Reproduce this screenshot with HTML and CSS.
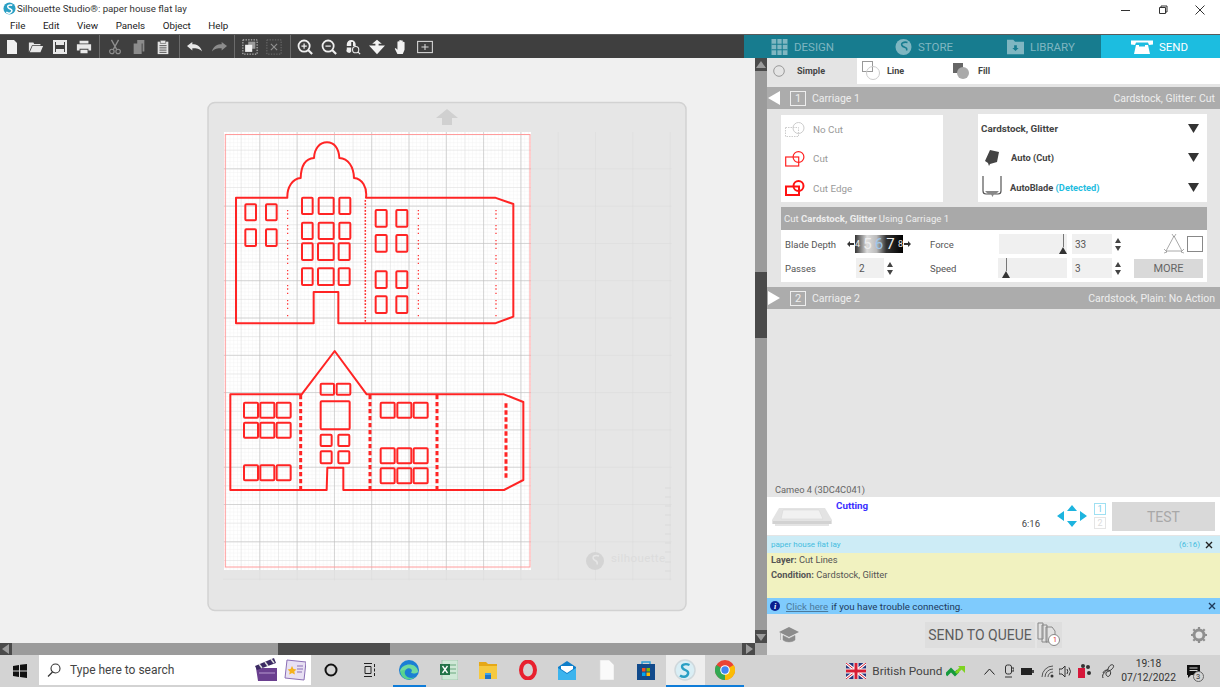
FILE: index.html
```html
<!DOCTYPE html>
<html lang="en">
<head>
<meta charset="utf-8">
<title>Silhouette Studio</title>
<link rel="stylesheet" href="styles.css">
</head>
<body>
<svg class="defs" width="0" height="0" aria-hidden="true">
  <defs>
    <pattern id="fine" x="223" y="132" width="3.73" height="3.73" patternUnits="userSpaceOnUse"><path d="M3.73 0V3.73H0" fill="none" stroke="#ececec" stroke-width=".6"/></pattern>
    <pattern id="mid" x="223" y="132" width="18.65" height="18.65" patternUnits="userSpaceOnUse"><path d="M18.65 0V18.65H0" fill="none" stroke="#d6d6d6" stroke-width=".8"/></pattern>
    <pattern id="major" x="223" y="132" width="37.3" height="37.3" patternUnits="userSpaceOnUse"><path d="M37.3 0V37.3H0" fill="none" stroke="#bdbdbd" stroke-width="1"/></pattern>
    <pattern id="matgrid" x="223" y="132" width="37.3" height="37.3" patternUnits="userSpaceOnUse"><path d="M37.3 0V37.3H0" fill="none" stroke="#d9d9d9" stroke-width="1"/></pattern>
  </defs>
</svg>
<div class="app">
  <header class="titlebar">
    <div class="title-left">
      <svg class="ic14" viewBox="0 0 14 14"><circle cx="7" cy="7" r="6.5" fill="#2a9fc4"/><path d="M10 3.5C7 2.5 4 4 5.5 6s5 1.500 4 4-4 2.500-6 1" fill="none" stroke="#fff" stroke-width="1.600"/></svg>
      <span>Silhouette Studio®: paper house flat lay</span>
    </div>
    <div class="winctl">
      <span class="winbtn"><svg width="10" height="10" viewBox="0 0 10 10"><path d="M0 5.500H9" stroke="#333" fill="none"/></svg></span>
      <span class="winbtn"><svg width="10" height="10" viewBox="0 0 10 10"><path d="M1.500 2.500h6v6h-6zM3 2.500V1h6v6H7.500" stroke="#333" fill="none"/></svg></span>
      <span class="winbtn"><svg width="10" height="10" viewBox="0 0 10 10"><path d="M.5.500l9 9M9.500.500l-9 9" stroke="#333" fill="none"/></svg></span>
    </div>
  </header>
  <nav class="menubar"><span>File</span><span>Edit</span><span>View</span><span>Panels</span><span>Object</span><span>Help</span></nav>

  <div class="toolbar">
    <div class="tools">
      <div class="toolgroup g1">
        <span class="tool"><svg viewBox="0 0 16 16"><path d="M3 1h7l3 3v11H3z" fill="#f0f0f0"/></svg></span>
        <span class="tool"><svg viewBox="0 0 18 16"><path d="M1 14V3h5l1 1.500h7V6H4.500zM5 7h12l-3 7H2z" fill="#e8e8e8"/></svg></span>
        <span class="tool"><svg viewBox="0 0 16 16"><path d="M2 2h12v12H2z" fill="none" stroke="#e8e8e8" stroke-width="2"/><path d="M4 2h8v4H4zM4 10h8v4H4z" fill="#e8e8e8"/></svg></span>
        <span class="tool"><svg viewBox="0 0 18 16"><path d="M4 1h10v3H4zM1 5h16v7h-3v-2H4v2H1zM5 11h8v4H5z" fill="#e8e8e8"/></svg></span>
      </div>
      <div class="toolgroup g2">
        <span class="tool"><svg viewBox="0 0 16 18"><path d="M4 1l6 11M12 1L6 12" stroke="#8f8f8f" stroke-width="1.500" fill="none"/><circle cx="4.500" cy="14" r="2.500" fill="none" stroke="#8f8f8f" stroke-width="1.300"/><circle cx="11.500" cy="14" r="2.500" fill="none" stroke="#8f8f8f" stroke-width="1.300"/></svg></span>
        <span class="tool"><svg viewBox="0 0 16 18"><path d="M6 1h8v13h-2V5H6zM2 5h9v12H2z" fill="#8c8c8c"/></svg></span>
        <span class="tool"><svg viewBox="0 0 14 18"><path d="M1 3h12v14H1z" fill="#e4e4e4"/><path d="M4 1.500h6V5H4z" fill="#e4e4e4" stroke="#444" stroke-width=".6"/><path d="M3 7.500h8M3 10h8M3 12.500h8M3 15h8" stroke="#444"/></svg></span>
      </div>
      <div class="toolgroup g3">
        <span class="tool"><svg viewBox="0 0 18 12"><path d="M0 5l6-4.500V3c5 0 9 2 11 8-3-3-6-3.500-11-3.500V10z" fill="#e8e8e8"/></svg></span>
        <span class="tool"><svg viewBox="0 0 18 12"><path d="M18 5L12 .5V3C7 3 3 5 1 11c3-3 6-3.500 11-3.500V10z" fill="#8c8c8c"/></svg></span>
      </div>
      <div class="toolgroup g4">
        <span class="tool"><svg viewBox="0 0 18 18"><rect x="1" y="1" width="16" height="16" fill="none" stroke="#e0e0e0" stroke-dasharray="1.500 1.500"/><path d="M7 3h8v8H7z" fill="#9a9a9a"/><path d="M3.500 6.500h8v8h-8z" fill="#f0f0f0"/></svg></span>
        <span class="tool"><svg viewBox="0 0 18 18"><rect x="1" y="1" width="16" height="16" fill="none" stroke="#777" stroke-dasharray="1.500 1.500"/><path d="M5.500 5.500l7 7M12.500 5.500l-7 7" stroke="#8f8f8f" stroke-width="1.300"/></svg></span>
      </div>
      <div class="toolgroup g5">
        <span class="tool"><svg viewBox="0 0 18 18"><circle cx="8" cy="8" r="6.300" fill="none" stroke="#efefef" stroke-width="2"/><path d="M12.500 12.500L17 17" stroke="#efefef" stroke-width="2.400"/><path d="M5 8h6M8 5v6" stroke="#efefef" stroke-width="1.400"/></svg></span>
        <span class="tool"><svg viewBox="0 0 18 18"><circle cx="8" cy="8" r="6.300" fill="none" stroke="#efefef" stroke-width="2"/><path d="M12.500 12.500L17 17" stroke="#efefef" stroke-width="2.400"/><path d="M5 8h6" stroke="#efefef" stroke-width="1.400"/></svg></span>
        <span class="tool"><svg viewBox="0 0 18 18"><path d="M2 6a5 5 0 0 1 10 0v2H9V3.500H7V8H2z" fill="#efefef"/><path d="M2 9.500h5V14a2.500 2.500 0 0 1-5-2.500z" fill="#efefef"/><circle cx="12" cy="12" r="3.500" fill="none" stroke="#efefef" stroke-width="1.200"/><path d="M14.500 14.500L17 17" stroke="#efefef" stroke-width="1.400"/></svg></span>
        <span class="tool"><svg viewBox="0 0 20 18"><path d="M10 0l6 5h-4v2h8l-10 11L0 7h8V5H4z" fill="#f2f2f2"/></svg></span>
        <span class="tool"><svg viewBox="0 0 16 18"><path d="M4 17l-3-6 1-1 2 2V3.500a1 1 0 0 1 2 0V8V2a1 1 0 0 1 2 0v6V2.500a1 1 0 0 1 2 0V8V4a1 1 0 0 1 2 0v8l-2 5z" fill="#f2f2f2"/></svg></span>
        <span class="tool"><svg viewBox="0 0 18 14"><rect x=".7" y=".7" width="16.600" height="12.600" fill="none" stroke="#d8d8d8" stroke-width="1.200"/><path d="M5 7h8M9 3.500v7" stroke="#d8d8d8" stroke-width="1.200"/></svg></span>
      </div>
    </div>
    <div class="tabs">
      <div class="tab t-design"><svg viewBox="0 0 16 16"><path d="M0 0h16v16H0z" fill="#7fb6c1"/><path d="M5.300 0v16M10.700 0v16M0 5.300h16M0 10.700h16" stroke="#177c8f" stroke-width="1.100"/></svg><span>DESIGN</span></div>
      <div class="tab t-store"><svg viewBox="0 0 16 16"><circle cx="8" cy="8" r="8" fill="#7fb6c1"/><path d="M12 3.500C8.500 2.500 5 4 6.500 6.500s6 1.500 4.500 5" fill="none" stroke="#177c8f" stroke-width="1.600"/></svg><span>STORE</span></div>
      <div class="tab t-library"><svg viewBox="0 0 19 16"><path d="M0 0h7l2 2h10v14H0z" fill="#7fb6c1"/><path d="M8 6h3v3h2l-3.500 3.500L6 9h2z" fill="#177c8f"/></svg><span>LIBRARY</span></div>
      <div class="tab t-send"><svg viewBox="0 0 22 16"><path d="M0 1.500h22v4l-4 .5-1-2.500H5L4 6l-4-.5z" fill="#fff"/><path d="M5 6h12l2 9H3z" fill="#fff"/><path d="M8 4.500h6v3H8z" fill="#1cbde0"/></svg><span>SEND</span></div>
    </div>
  </div>

  <main class="workspace">
    <div class="canvas-col">
      <div class="canvas">
        <svg class="mat" viewBox="0 58 755 585" width="755" height="585">
          <rect x="208" y="102.500" width="478" height="508" rx="7" fill="#e6e6e6" stroke="#d2d2d2" stroke-width="1.500"/>
          <rect x="223" y="132" width="448.600" height="448.500" fill="url(#matgrid)"/>
          <path d="M447 109l11 9h-6v7h-10v-7h-6z" fill="#d0d0d0"/>
          <g fill="#d4d4d4"><circle cx="595" cy="561" r="9"/></g>
          <path d="M599 556c-4-1.500-7 .5-5.500 3s5 1.500 3.500 5.500" fill="none" stroke="#e6e6e6" stroke-width="1.500"/>
          <text class="mat-brand" x="611" y="562">silhouette</text>
          <path d="M665 488h6M665 497h6M665 506h6M665 515h6M665 525h6M665 534h6M665 543h6M665 552h6M665 562h6M665 571h6" stroke="#dadada"/>
          <rect x="224" y="132" width="307" height="438" fill="#fff"/>
          <rect x="224" y="132" width="307" height="438" fill="url(#fine)"/>
          <rect x="224" y="132" width="307" height="438" fill="url(#mid)"/>
          <rect x="224" y="132" width="307" height="438" fill="url(#major)"/>
          <rect x="225.300" y="134.500" width="304.700" height="432.500" fill="none" stroke="#ff9c9c"/>

          <g class="cut" transform="translate(205 100) scale(.33333)">
            <path d="M93 293V670H326V576H400V670H870L925 650V312L870 293H483C487 262 472 236 447 234C446 200 430 176 403 174C402 145 388 127 366 127C344 127 328 145 327 174C300 176 288 200 287 234C262 236 246 262 247 293Z"/>
            <rect x="121" y="313" width="32" height="48" rx="3"/><rect x="183" y="313" width="32" height="48" rx="3"/>
            <rect x="121" y="388" width="32" height="50" rx="3"/><rect x="183" y="388" width="32" height="50" rx="3"/>
            <rect x="291" y="293" width="32" height="49" rx="3"/><rect x="341" y="293" width="45" height="49" rx="3"/><rect x="403" y="293" width="33" height="49" rx="3"/>
            <rect x="291" y="368" width="32" height="49" rx="3"/><rect x="341" y="368" width="45" height="49" rx="3"/><rect x="403" y="368" width="33" height="49" rx="3"/>
            <rect x="291" y="430" width="32" height="50" rx="3"/><rect x="339" y="430" width="47" height="50" rx="3"/><rect x="401" y="430" width="33" height="50" rx="3"/>
            <rect x="291" y="505" width="32" height="50" rx="3"/><rect x="339" y="505" width="47" height="50" rx="3"/><rect x="401" y="505" width="33" height="50" rx="3"/>
            <rect x="512" y="330" width="33" height="50" rx="3"/><rect x="574" y="330" width="33" height="50" rx="3"/>
            <rect x="512" y="405" width="33" height="50" rx="3"/><rect x="574" y="405" width="33" height="50" rx="3"/>
            <rect x="512" y="514" width="33" height="50" rx="3"/><rect x="574" y="514" width="33" height="50" rx="3"/>
            <rect x="512" y="589" width="33" height="50" rx="3"/><rect x="574" y="589" width="33" height="50" rx="3"/>
            <path class="dots" d="M248 330V650M640 330V650M873 330V650"/>
            <path class="dots strong" d="M481 300V670"/>
          </g>

          <g class="cut" transform="translate(205 340) scale(.33333)">
            <path d="M76 163H290L389 33L485 163H897L955 186V420L897 450H415V383H367L365 450H76Z"/>
            <rect x="117" y="188" width="42" height="45" rx="3"/><rect x="166" y="188" width="42" height="45" rx="3"/><rect x="215" y="188" width="42" height="45" rx="3"/>
            <rect x="117" y="248" width="42" height="45" rx="3"/><rect x="166" y="248" width="42" height="45" rx="3"/><rect x="215" y="248" width="42" height="45" rx="3"/>
            <rect x="117" y="376" width="42" height="45" rx="3"/><rect x="166" y="376" width="42" height="45" rx="3"/><rect x="215" y="376" width="42" height="45" rx="3"/>
            <rect x="347" y="131" width="40" height="33" rx="3"/><rect x="395" y="131" width="41" height="33" rx="3"/>
            <rect x="347" y="184" width="87" height="84" rx="3"/>
            <rect x="347" y="284" width="33" height="34" rx="3"/><rect x="400" y="284" width="33" height="34" rx="3"/>
            <rect x="347" y="334" width="33" height="36" rx="3"/><rect x="400" y="334" width="33" height="36" rx="3"/>
            <rect x="527" y="188" width="42" height="45" rx="3"/><rect x="577" y="188" width="42" height="45" rx="3"/><rect x="626" y="188" width="42" height="45" rx="3"/>
            <rect x="527" y="325" width="42" height="45" rx="3"/><rect x="577" y="325" width="42" height="45" rx="3"/><rect x="626" y="325" width="42" height="45" rx="3"/>
            <rect x="527" y="385" width="42" height="45" rx="3"/><rect x="577" y="385" width="42" height="45" rx="3"/><rect x="626" y="385" width="42" height="45" rx="3"/>
            <path class="dash" d="M287 165V450M495 165V450M696 165V450M903 190V420"/>
          </g>
        </svg>
      </div>
      <div class="hscroll">
        <span class="sbtn"><svg width="8" height="10" viewBox="0 0 8 10"><path d="M7 0v10L0 5z" fill="#9b9b9b"/></svg></span>
        <div class="htrack"><span class="hthumb"></span></div>
        <span class="sbtn"><svg width="8" height="10" viewBox="0 0 8 10"><path d="M1 0v10l7-5z" fill="#9b9b9b"/></svg></span>
      </div>
    </div>

    <div class="vscroll-col">
      <span class="sbtn vbtn"><svg width="10" height="8" viewBox="0 0 10 8"><path d="M0 7h10L5 0z" fill="#9b9b9b"/></svg></span>
      <div class="vtrack"><span class="vthumb"></span></div>
      <span class="sbtn vbtn"><svg width="10" height="8" viewBox="0 0 10 8"><path d="M0 1h10L5 8z" fill="#9b9b9b"/></svg></span>
      <span class="corner"></span>
    </div>

    <aside class="side">
      <div class="linetabs">
        <div class="lt lt-simple"><svg width="12" height="12" viewBox="0 0 12 12"><circle cx="6" cy="6" r="5.300" fill="none" stroke="#999"/></svg><b>Simple</b></div>
        <div class="lt lt-line"><svg width="18" height="20" viewBox="0 0 18 20"><rect x=".5" y=".5" width="10" height="10" fill="none" stroke="#999"/><circle cx="11" cy="12" r="6.500" fill="none" stroke="#ccc"/></svg><b>Line</b></div>
        <div class="lt lt-fill"><svg width="16" height="16" viewBox="0 0 16 16"><rect width="10" height="10" fill="#666"/><circle cx="10" cy="10" r="6" fill="#aaa"/></svg><b>Fill</b></div>
      </div>

      <div class="carbar c1">
        <svg class="tri" width="12" height="14" viewBox="0 0 12 14"><path d="M12 0v14L0 7z" fill="#fff"/></svg>
        <span class="numbox">1</span><span class="car-name">Carriage 1</span>
        <span class="car-info">Cardstock, Glitter: Cut</span>
      </div>

      <div class="options">
        <div class="cutlist">
          <div class="cutrow"><svg width="20" height="16" viewBox="0 0 20 16"><rect x=".5" y="5.500" width="13" height="9" fill="none" stroke="#ccc" stroke-dasharray="1.500 1"/><circle cx="13.500" cy="6" r="5.500" fill="none" stroke="#ccc"/></svg><span>No Cut</span></div>
          <div class="cutrow"><svg width="20" height="16" viewBox="0 0 20 16"><rect x=".7" y="6" width="13" height="9" fill="none" stroke="#f22" stroke-width="1.200"/><circle cx="13.500" cy="6" r="5.400" fill="none" stroke="#f22" stroke-width="1.200"/></svg><span>Cut</span></div>
          <div class="cutrow"><svg width="20" height="16" viewBox="0 0 20 16"><rect x="1" y="6.500" width="13" height="8.500" fill="none" stroke="#f11" stroke-width="2"/><circle cx="13.500" cy="6" r="5" fill="none" stroke="#f11" stroke-width="2"/></svg><span>Cut Edge</span></div>
        </div>
        <div class="matlist">
          <div class="matrow m1"><b>Cardstock, Glitter</b><svg class="dd" width="11" height="9" viewBox="0 0 11 9"><path d="M0 0h11L5.500 9z"/></svg></div>
          <div class="matrow m2"><svg class="matic" width="14" height="16" viewBox="0 0 14 16"><path d="M5 0l9 2-2 10-7 2-1 2-1-3-3-2z" fill="#444"/></svg><b>Auto (Cut)</b><svg class="dd" width="11" height="9" viewBox="0 0 11 9"><path d="M0 0h11L5.500 9z"/></svg></div>
          <div class="matrow m3"><svg class="matic blade" width="20" height="22" viewBox="0 0 20 22"><path d="M1 0V15q0 3 3 3H16q3 0 3-3V0" fill="none" stroke="#555" stroke-width="1.200"/><path d="M3 15h14l-3 3H6zM9 18h3l-1.500 3z" fill="#888"/></svg><b>AutoBlade <em>(Detected)</em></b><svg class="dd" width="11" height="9" viewBox="0 0 11 9"><path d="M0 0h11L5.500 9z"/></svg></div>
        </div>
      </div>

      <div class="cuthead"><span>Cut <b>Cardstock, Glitter</b> Using Carriage 1</span></div>
      <div class="settings">
        <span class="lbl">Blade Depth</span>
        <div class="ruler-wrap"><svg width="7" height="6" viewBox="0 0 7 6"><path d="M0 3l3-3v2h4v2H3v2z" fill="#333"/></svg><span class="ruler"><span class="r1">4</span><span>5</span><span class="blue">6</span><span>7</span><span class="r1">8</span></span><svg width="7" height="6" viewBox="0 0 7 6"><path d="M7 3L4 0v2H0v2h4v2z" fill="#333"/></svg></div>
        <span class="lbl">Force</span>
        <div class="slider sl-force"><span class="needle"></span></div>
        <div class="numfield"><span class="box w40">33</span><span class="spin"><i class="up"></i><i class="down"></i></span></div>
        <div class="shapes"><svg width="20" height="20" viewBox="0 0 20 20"><path d="M10 2L18 17H2z" fill="none" stroke="#aaa"/><path d="M8 0l2 3 2-3M0 15l3 3-3 1M20 15l-3 3 3 1" fill="none" stroke="#888" stroke-width=".7"/></svg><span class="sq"></span></div>
        <span class="lbl">Passes</span>
        <div class="numfield"><span class="box w28">2</span><span class="spin"><i class="up"></i><i class="down"></i></span></div>
        <span class="lbl">Speed</span>
        <div class="slider sl-speed"><span class="needle"></span></div>
        <div class="numfield"><span class="box w40">3</span><span class="spin"><i class="up"></i><i class="down"></i></span></div>
        <button class="more">MORE</button>
      </div>

      <div class="carbar c2">
        <svg class="tri" width="12" height="14" viewBox="0 0 12 14"><path d="M0 0v14L12 7z" fill="#fff"/></svg>
        <span class="numbox">2</span><span class="car-name">Carriage 2</span>
        <span class="car-info">Cardstock, Plain: No Action</span>
      </div>

      <div class="sidespace"></div>

      <div class="device">Cameo 4 (3DC4C041)</div>
      <div class="status">
        <svg class="printer" width="62" height="20" viewBox="0 0 62 20"><path d="M8 1h46l7 12v4H1v-4z" fill="#e3e3e3"/><path d="M12 3h36l4 9H10z" fill="#f1f1f1" stroke="#d9d9d9" stroke-width=".6"/><path d="M2 14h58v3H2z" fill="#d2d2d2"/><path d="M4 17h54v2H4z" fill="#e4e4e4"/></svg>
        <b class="cutting">Cutting</b>
        <span class="time">6:16</span>
        <svg class="arrows" width="30" height="22" viewBox="0 0 30 22"><path d="M15 0l5 6H10zM15 22l-5-6h10zM0 11l7-5v10zM30 11l-7-5v10z" fill="#1db4df"/></svg>
        <div class="carnums"><span class="cn on">1</span><span class="cn">2</span></div>
        <button class="test">TEST</button>
      </div>
      <div class="queue"><span>paper house flat lay</span><span class="qtime">(6:16)</span><svg class="qx" width="8" height="8" viewBox="0 0 8 8"><path d="M1 1l6 6M7 1L1 7" stroke="#222" stroke-width="1.400"/></svg></div>
      <div class="note">
        <p><b>Layer:</b> Cut Lines</p>
        <p><b>Condition:</b> Cardstock, Glitter</p>
      </div>
      <div class="help">
        <span class="info">i</span><a class="hl">Click here</a><span>if you have trouble connecting.</span><svg class="hx" width="8" height="8" viewBox="0 0 8 8"><path d="M1 1l6 6M7 1L1 7" stroke="#1e3a5c" stroke-width="1.400"/></svg>
      </div>
      <div class="sendrow">
        <svg class="cap" width="20" height="17" viewBox="0 0 20 17"><path d="M10 1l10 5-10 5L0 6z" fill="#8c8c8c"/><path d="M4 9.500l6 3 6-3V14c-3 2.500-9 2.500-12 0zM1.500 7v7" fill="#8c8c8c" stroke="#8c8c8c" stroke-width=".5"/></svg>
        <button class="sendq">SEND TO QUEUE</button>
        <span class="stack"><svg width="25" height="25" viewBox="0 0 25 25"><path d="M1 1h5v16H1zM5 3h5v17H5zM9 5h6l3 4v11H9z" fill="#e2e2e2" stroke="#888"/><circle cx="17" cy="18" r="5.500" fill="#fff" stroke="#888"/></svg><span class="badge">1</span></span>
        <svg class="gear" width="16" height="16" viewBox="0 0 16 16"><circle cx="8" cy="8" r="5" fill="none" stroke="#8f8f8f" stroke-width="3"/><path d="M8 0v3M8 13v3M0 8h3M13 8h3M2.300 2.300l2 2M11.700 11.700l2 2M2.300 13.700l2-2M11.700 4.300l2-2" stroke="#8f8f8f" stroke-width="2.200"/></svg>
      </div>
    </aside>
  </main>

  <footer class="taskbar">
    <span class="start"><svg width="14" height="14" viewBox="0 0 14 14"><path d="M0 2l6-1v5.500H0zM7 .8L14 0v6.500H7zM0 7.500h6V13l-6-1zM7 7.500h7V14l-7-1z" fill="#111"/></svg></span>
    <div class="search">
      <svg width="14" height="14" viewBox="0 0 14 14"><circle cx="8.500" cy="5.500" r="4.500" fill="none" stroke="#333" stroke-width="1.100"/><path d="M5.500 9L1 13.500" stroke="#333" stroke-width="1.300"/></svg>
      <span class="stext">Type here to search</span>
      <svg class="clap" width="23" height="24" viewBox="0 0 23 24"><path d="M1 10h21v13H3z" fill="#6a3f8f"/><path d="M0 8L19 0l2 5L2 12z" fill="#3b2a63"/><path d="M4 6l3 4M10 4l3 4M16 1l3 4" stroke="#ddd" stroke-width="1.500"/><path d="M4 15h16" stroke="#b79ad0"/></svg>
      <svg class="notes" width="22" height="22" viewBox="0 0 22 22"><path d="M3 1l19 2-2 18L1 19z" fill="#e8e0f3" stroke="#8b6fb5"/><path d="M13 7h6M13 10h6M13 13h5" stroke="#8b6fb5"/><path d="M8 7l1.500 3 3 .5-2.200 2 .6 3L8 14l-2.800 1.500.6-3-2.200-2 3-.5z" fill="#f5b21d"/></svg>
    </div>
    <span class="slot"><svg width="14" height="14" viewBox="0 0 14 14"><circle cx="7" cy="7" r="5.500" fill="none" stroke="#111" stroke-width="2"/></svg></span>
    <span class="slot"><svg width="14" height="14" viewBox="0 0 14 14"><path d="M1 .5h8M1 13.500h8M2 3.500h6v7H2zM11.500 1v3M11.500 5.500v3M11.500 10v3" fill="none" stroke="#222"/></svg></span>
    <span class="slot active"><svg width="20" height="20" viewBox="0 0 20 20"><circle cx="10" cy="10" r="10" fill="#1b7fd4"/><path d="M1 11C3 3 17 2 19 11c.5 3-5 3-7 1.500 3-3-2-6-5-3-4 4 2 11 9 7.500-4 4-13 4-15-6z" fill="#58d48e"/><path d="M7 9.500c3-3 8 0 5 3 2 1.500 7.500 1.500 7-1.500C17 2 3 3 1 11" fill="#fff" fill-opacity=".15"/></svg></span>
    <span class="slot"><svg width="18" height="20" viewBox="0 0 18 20"><path d="M2 0h16v20H2z" fill="#cfe8d6" stroke="#8fb79a" stroke-width=".6"/><path d="M9 5h7M9 9h7M9 13h7" stroke="#6aa87f"/><path d="M0 4h10v11H0z" fill="#217346"/><path d="M2.500 6l5 7M7.500 6l-5 7" stroke="#fff" stroke-width="1.300"/></svg></span>
    <span class="slot"><svg width="18" height="17" viewBox="0 0 18 17"><path d="M0 0h7l2 2h9v3H0z" fill="#e6a817"/><path d="M0 4h18v13H0z" fill="#f6c93f"/><path d="M6 11h6v6H6z" fill="#1f74c9"/><path d="M6 11h6v2H6z" fill="#3ea4ee"/></svg></span>
    <span class="slot"><svg width="18" height="20" viewBox="0 0 18 20"><ellipse cx="9" cy="10" rx="7" ry="8.500" fill="none" stroke="#e8212e" stroke-width="4"/></svg></span>
    <span class="slot"><svg width="18" height="19" viewBox="0 0 18 19"><path d="M0 6l9-6 9 6v13H0z" fill="#0f7ec9"/><path d="M0 7l9 6 9-6v12H0z" fill="#3cb4ee"/><path d="M3 5h12v3l-6 4-6-4z" fill="#fff"/></svg></span>
    <span class="slot"><svg width="15" height="20" viewBox="0 0 15 20"><path d="M1 0h9l5 5v15H1z" fill="#fafafa" stroke="#ddd" stroke-width=".6"/></svg></span>
    <span class="slot"><svg width="18" height="20" viewBox="0 0 18 20"><path d="M5 4V2h8v2" fill="none" stroke="#2a9fd8" stroke-width="1.400"/><path d="M0 4h18v16H0z" fill="#114a8b"/><path d="M5 8h3.500v3.500H5z" fill="#f25022"/><path d="M9.500 8H13v3.500H9.500z" fill="#7fba00"/><path d="M5 12.500h3.500V16H5z" fill="#00a4ef"/><path d="M9.500 12.500H13V16H9.500z" fill="#ffb900"/></svg></span>
    <span class="slot open sel"><svg width="22" height="22" viewBox="0 0 22 22"><circle cx="11" cy="11" r="10" fill="#d9eef5" stroke="#cfd8dc" stroke-width="1.500"/><path d="M15.500 6C11 4 6.500 6 8.500 9s7 2 5.500 6-6 3-8 1.500" fill="none" stroke="#2a9fc4" stroke-width="2.400"/></svg></span>
    <span class="slot open"><svg width="20" height="20" viewBox="0 0 20 20"><circle cx="10" cy="10" r="10" fill="#ea4335"/><path d="M10 10L18.700 5A10 10 0 0 1 10 20z" fill="#fbbc05"/><path d="M10 10L10 20A10 10 0 0 1 1.300 5z" fill="#34a853"/><circle cx="10" cy="10" r="4.800" fill="#fff"/><circle cx="10" cy="10" r="3.700" fill="#4285f4"/></svg></span>
    <div class="tray">
      <svg class="flag" width="20" height="16" viewBox="0 0 20 16"><path d="M0 0h20v16H0z" fill="#26367d"/><path d="M0 0l20 16M20 0L0 16" stroke="#fff" stroke-width="3"/><path d="M0 0l20 16M20 0L0 16" stroke="#d81e34" stroke-width="1"/><path d="M10 0v16M0 8h20" stroke="#fff" stroke-width="5"/><path d="M10 0v16M0 8h20" stroke="#d81e34" stroke-width="3"/></svg>
      <span class="pound">British Pound</span>
      <svg class="graph" width="19" height="13" viewBox="0 0 19 13"><path d="M0 10l5-5 4 4 3-3" fill="none" stroke="#169a3c" stroke-width="3.500"/><path d="M12 1h7v7z" fill="#7ed321"/><path d="M10 8l5-5" stroke="#7ed321" stroke-width="3"/></svg>
      <svg class="t-chev" width="11" height="7" viewBox="0 0 11 7"><path d="M.5 6.500l5-5.500 5 5.500" fill="none" stroke="#222"/></svg>
      <svg class="t1" width="10" height="14" viewBox="0 0 10 14"><rect x="1.500" y="1" width="6" height="9" rx="2" fill="none" stroke="#333"/><path d="M1 13h7M8 4h2v3H8" fill="none" stroke="#333"/></svg>
      <svg class="t2" width="13" height="9" viewBox="0 0 13 9"><path d="M0 1h11v7H0z" fill="#222"/><path d="M11 3h2v3h-2z" fill="#444"/></svg>
      <svg class="t3" width="13" height="13" viewBox="0 0 13 13"><path d="M1 12a11 11 0 0 1 11-11M4 12a8 8 0 0 1 8-8M7 12a5 5 0 0 1 5-5" fill="none" stroke="#555"/><circle cx="11" cy="11" r="1.500" fill="#333"/></svg>
      <svg class="t4" width="13" height="13" viewBox="0 0 13 13"><path d="M0 4h3l3-3v11L3 9H0zM8 4q1.500 2.500 0 5M10 2.500q3 4 0 8" fill="none" stroke="#333"/></svg>
      <svg class="t5" width="14" height="14" viewBox="0 0 14 14"><path d="M0 4h7v10H0z" fill="#d6173a"/><circle cx="10" cy="3" r="2" fill="#333"/><circle cx="11" cy="9" r="2" fill="#333"/><circle cx="5" cy="2" r="2" fill="#333"/></svg>
      <svg class="t6" width="14" height="16" viewBox="0 0 14 16"><path d="M2 15C0 10 6 9 7 6s3-5 5-4-1 5-4 6-4 3-2 5 5-3 3-5-6-1-7 2" fill="none" stroke="#333"/></svg>
      <div class="clock"><span>19:18</span><span>07/12/2022</span></div>
      <span class="notif"><svg width="13" height="13" viewBox="0 0 13 13"><path d="M0 0h13v10H4l-3 3v-3H0z" fill="#111"/><path d="M2.500 3h8M2.500 5.500h8" stroke="#d3d3d3"/></svg><span class="nbadge">3</span></span>
    </div>
  </footer>
</div>
</body>
</html>
```
FILE: styles.css
```css
* { box-sizing: border-box; }
html, body { margin: 0; padding: 0; }
body { font-family: Roboto, "Open Sans", "Liberation Sans", sans-serif; color: #333; background: #fff; overflow: hidden; }
.defs { position: absolute; }
.app { width: 1220px; height: 687px; display: flex; flex-direction: column; overflow: hidden; }

.titlebar { height: 17px; display: flex; align-items: center; justify-content: space-between; background: #fff; padding: 0 2px 0 3px; font-size: 9.700px; }
.title-left { display: flex; align-items: center; gap: 1px; }
.ic14 { width: 13px; height: 13px; }
.winctl { display: flex; }
.winbtn { width: 37px; display: flex; justify-content: center; align-items: center; height: 17px; padding-top: 2px; }

.menubar { height: 17px; display: flex; gap: 17.500px; padding-left: 10px; align-items: center; font-size: 9.800px; color: #222; background: #fff; }

.toolbar { height: 24px; display: flex; justify-content: space-between; background: #3f3f3f; border-top: 1px solid #5a5a5a; }
.tools { display: flex; }
.toolgroup { display: flex; align-items: center; border-right: 1px solid #6b6b6b; height: 23px; }
.g1 { width: 100px; }
.g2 { width: 80px; padding-left: 3px; }
.g3 { width: 55px; padding-left: 3px; }
.g4 { width: 56px; padding-left: 3px; }
.g5 { border-right: 0; padding-left: 2px; }
.tool { width: 24px; height: 23px; display: flex; align-items: center; justify-content: center; }
.tool svg { width: 16px; height: 16px; }

.tabs { width: 476px; display: flex; background: #177c8f; height: 23px; }
.tab { display: flex; align-items: center; gap: 6px; font-size: 11.500px; color: #7fb6c1; white-space: nowrap; }
.tab svg { height: 16px; width: 17px; }
.t-design { padding-left: 27px; width: 143px; }
.t-store { padding-left: 8px; width: 112px; }
.t-library { padding-left: 8px; width: 102px; }
.t-send { flex: 1; background: #1cbde0; color: #fff; padding-left: 30px; }
.t-send svg { width: 22px; }

.workspace { flex: 1; display: flex; min-height: 0; }
.canvas-col { width: 755px; display: flex; flex-direction: column; }
.canvas { height: 585px; background: #f0f0f0; }
.mat { display: block; }
.mat-brand { font: 11.500px Roboto, sans-serif; fill: #dcdcdc; letter-spacing: .4px; }
.cut { fill: none; stroke: #ff2424; stroke-width: 6; stroke-linejoin: round; }
.dots { stroke-width: 3.500; stroke-dasharray: 4 6 4 9 4 18; }
.strong { stroke-width: 4.500; stroke-dasharray: 5 5; }
.dash { stroke-width: 9; stroke-dasharray: 13 8; }

.hscroll { height: 12px; display: flex; background: #9b9b9b; }
.sbtn { width: 12px; height: 12px; background: #4a4a4a; display: flex; align-items: center; justify-content: center; flex: none; }
.htrack { flex: 1; padding-left: 266px; }
.hthumb { display: block; width: 112px; height: 12px; background: #4d4d4d; }
.hscroll .sbtn:last-child { width: 13px; }

.vscroll-col { width: 12px; display: flex; flex-direction: column; background: #9b9b9b; }
.vbtn { height: 13px; }
.vtrack { flex: 1; padding-top: 201px; }
.vthumb { display: block; height: 66px; background: #4a4a4a; }
.corner { height: 12px; background: #a6a6a6; }

.side { width: 453px; background: #e5e5e5; display: flex; flex-direction: column; }
.linetabs { height: 26px; display: flex; background: #fff; font-size: 9px; }
.lt { display: flex; align-items: center; color: #444; }
.lt-simple { width: 90px; background: #e4e4e4; padding-left: 6px; gap: 12px; }
.lt-line { width: 96px; padding-left: 5px; gap: 7px; }
.lt-fill { padding-left: 0; gap: 9px; }

.carbar { height: 22px; background: #acacac; display: flex; align-items: center; color: #eee; font-size: 10.500px; padding: 0 5px 0 1px; }
.c1 { margin-top: 3px; }
.c2 { margin-top: 5px; }
.numbox { width: 16px; height: 15px; border: 1px solid #eee; display: flex; align-items: center; justify-content: center; margin: 0 6px 0 10px; font-size: 11px; }
.car-info { margin-left: auto; }

.options { display: flex; padding: 5px 13px 0 14px; justify-content: space-between; height: 98px; }
.cutlist { width: 162px; height: 87px; margin-top: 1px; background: #fff; padding: 0 4px; display: flex; flex-direction: column; }
.cutrow { display: flex; align-items: center; gap: 8px; font-size: 9.800px; color: #9a9a9a; height: 29.300px; flex: none; }
.matlist { width: 229px; height: 88px; background: #fff; display: flex; flex-direction: column; justify-content: space-around; padding: 0 8px 0 3px; }
.matrow { display: flex; align-items: center; font-size: 9.800px; color: #444; height: 24px; }
.m2, .m3 { font-size: 9.300px; }
.matrow em { font-style: normal; color: #1fbde0; }
.matic { margin: 0 12px 0 4px; }
.matic.blade { margin: 0 8px 0 1px; }
.dd { margin-left: auto; fill: #333; }

.cuthead { margin: 0 13px 0 14px; height: 23px; background: #a9a9a9; color: #eee; font-size: 9.600px; display: flex; align-items: center; padding-left: 3px; }
.settings { margin: 0 13px 0 14px; height: 52px; background: #fff; display: grid; grid-template-columns: 71px 74px 69px 73px 62px 1fr; grid-template-rows: 24px 24px; align-items: center; padding: 2px 4px; font-size: 9.500px; color: #555; }
.ruler-wrap { display: flex; align-items: center; margin-left: -9px; gap: 1px; }
.ruler { width: 48px; height: 18px; display: flex; align-items: center; justify-content: space-between; overflow: hidden; color: #eee; font-size: 15px; background: linear-gradient(90deg, #333 0%, #ddd 25%, #bbb 45%, #333 65%, #000 100%); }
.ruler .blue { color: #9cc6ea; }
.ruler .r1 { font-size: 9px; }
.slider { height: 20px; position: relative; background: #f0f0f0; }
.sl-force { width: 68px; }
.sl-speed { width: 69px; margin-left: -1px; background: #efefef; }
.needle { position: absolute; bottom: 0; width: 8px; height: 20px; background: linear-gradient(#777, #777) center top / 1px 13px no-repeat; }
.needle::after { content: ""; position: absolute; bottom: 0; left: 0; border: 4px solid transparent; border-top: 0; border-bottom: 7px solid #333; }
.sl-force .needle { right: 0; }
.sl-speed .needle { left: 4px; }
.numfield { display: flex; align-items: center; gap: 2px; color: #555; }
.box { height: 20px; background: #f0f0f0; display: flex; align-items: center; padding-left: 3px; font-size: 10px; }
.w40 { width: 40px; }
.w28 { width: 28px; }
.spin { display: flex; flex-direction: column; gap: 3px; margin-left: 1px; }
.spin i { display: block; width: 0; border: 3px solid transparent; }
.spin .up { border-top: 0; border-bottom: 5px solid #444; }
.spin .down { border-bottom: 0; border-top: 5px solid #444; }
.shapes { display: flex; justify-content: flex-end; align-items: center; gap: 3px; }
.sq { width: 16px; height: 16px; border: 1px solid #888; }
.more { width: 69px; height: 19px; border: 0; background: #d9d9d9; color: #666; font: 11px Roboto, sans-serif; padding: 0; }

.sidespace { flex: 1; }
.device { height: 16px; padding-left: 8px; font-size: 9.300px; color: #666; display: flex; align-items: center; }
.status { height: 38px; background: #fff; display: flex; align-items: center; position: relative; padding: 0 5px 0 4px; }
.printer { margin-right: 3px; margin-top: 2px; }
.cutting { align-self: flex-start; margin-top: 3px; font-size: 9.800px; color: #3a2fff; }
.time { font-size: 9.500px; color: #444; margin: 14px 0 0 auto; }
.arrows { margin: 0 0 0 17px; }
.carnums { display: flex; flex-direction: column; gap: 2px; margin: 0 6px 0 7px; }
.cn { width: 12px; height: 12px; border: 1px solid #e5e5e5; color: #ddd; font-size: 9px; display: flex; align-items: center; justify-content: center; }
.cn.on { border-color: #9fe0f2; color: #7fd0ea; }
.test { width: 103px; height: 29px; padding: 2px 0 0; border: 0; background: #d9d9d9; color: #a8a8a8; font: 14px Roboto, sans-serif; }
.queue { height: 17px; margin-top: 1px; background: #cdecf6; display: flex; align-items: center; font-size: 8px; color: #45bde0; padding: 0 7px 0 4px; }
.qtime { margin-left: auto; }
.qx { margin-left: 5px; }
.note { height: 45px; background: #f1f2c0; padding: 1px 4px; font-size: 9.300px; color: #555; }
.note p { margin: 0 0 3px; line-height: 12px; }
.help { height: 16px; background: #7fcbfd; display: flex; align-items: center; gap: 3px; font-size: 9.700px; color: #1e3a5c; padding: 0 4px 0 3px; }
.info { width: 10px; height: 10px; background: #0a1f8f; color: #fff; border-radius: 50%; display: flex; align-items: center; justify-content: center; font: italic bold 8px "Liberation Serif", serif; }
.hl { color: #4c7a9c; text-decoration: underline; margin-left: 3px; }
.hx { margin-left: auto; }
.sendrow { height: 41px; display: flex; align-items: center; padding-right: 13px; padding-left: 12px; }
.sendq { margin-left: 126px; width: 110px; height: 26px; border: 0; background: #dedede; color: #5c5c5c; font: 14px Roboto, sans-serif; padding: 0; white-space: nowrap; }
.stack { position: relative; margin-left: 2px; width: 25px; height: 26px; background: #dedede; display: flex; }
.badge { position: absolute; right: 1px; bottom: 2px; width: 12px; height: 12px; text-align: center; font-size: 7px; line-height: 12px; color: #d22; }
.gear { margin-left: auto; }

.taskbar { height: 32px; background: #d3d3d3; display: flex; align-items: center; }
.start { width: 39px; display: flex; justify-content: center; }
.search { width: 272px; height: 30px; align-self: flex-start; background: #fff; display: flex; align-items: center; padding: 0 5px 0 8px; font-size: 12px; color: #444; }
.stext { margin-left: 9px; }
.clap { margin-left: auto; }
.notes { margin-left: 6px; }
.slot { width: 39.400px; height: 32px; display: flex; align-items: center; justify-content: center; flex: none; border-bottom: 2px solid transparent; }
.active, .open { border-bottom-color: #0f7cd8; }
.active { margin: 0 3px; width: 33.400px; }
.sel { background: #eeeeee; }
.tray { flex: 1; display: flex; align-items: center; position: relative; height: 32px; padding-left: 102px; }
.pound { font-size: 11.800px; color: #444; margin-left: 6px; white-space: nowrap; }
.graph { margin-left: 3px; }
.t-chev { margin-left: 19px; }
.t1 { margin-left: 9px; }
.t2 { margin-left: 7px; }
.t3 { margin-left: 7px; }
.t4 { margin-left: 5px; }
.t5 { margin-left: 6px; }
.t6 { margin-left: 9px; }
.clock { display: flex; flex-direction: column; align-items: center; font-size: 10.300px; line-height: 14px; color: #333; margin-left: 6px; width: 56px; }
.notif { position: relative; margin-left: 10px; display: flex; }
.nbadge { position: absolute; left: 6px; top: 6px; width: 11px; height: 11px; border: 1px solid #666; border-radius: 50%; background: #d3d3d3; font-size: 7.500px; line-height: 10px; text-align: center; color: #333; }
```
